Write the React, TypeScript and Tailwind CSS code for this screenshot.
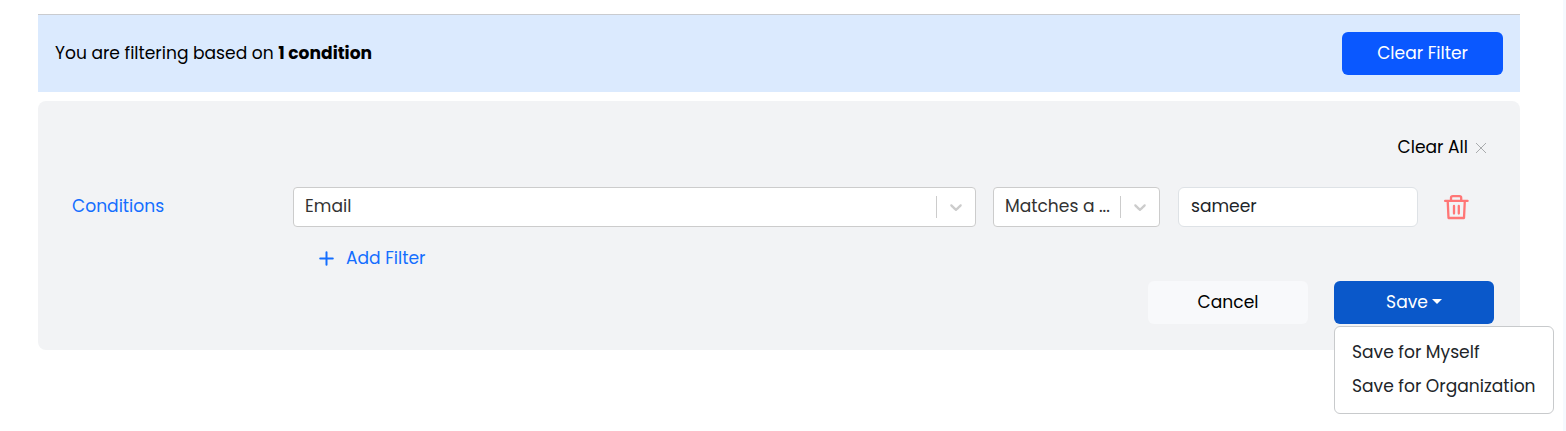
import React from "react";

function Chevron() {
  return (
    <svg width="20" height="20" viewBox="0 0 20 20" className="fill-[#cccccc]">
      <path d="M4.516 7.548c0.436-0.446 1.043-0.481 1.576 0l3.908 3.747 3.908-3.747c0.533-0.481 1.141-0.446 1.574 0 0.436 0.445 0.408 1.197 0 1.615-0.406 0.418-4.695 4.502-4.695 4.502-0.217 0.223-0.502 0.335-0.787 0.335s-0.57-0.112-0.789-0.335c0 0-4.287-4.084-4.695-4.502s-0.436-1.17 0-1.615z" />
    </svg>
  );
}

function Select({ className, children }: { className: string; children: React.ReactNode }) {
  return (
    <div className={`flex h-10 items-center rounded border border-[#cccccc] bg-white pl-[11px] ${className}`}>
      <div className="-mt-0.5 grow whitespace-nowrap text-[#333333]">{children}</div>
      <div className="h-[22px] w-px bg-[#cccccc]" />
      <div className="flex w-[38px] items-center justify-center">
        <Chevron />
      </div>
    </div>
  );
}

function TrashIcon() {
  return (
    <svg width="26" height="26" viewBox="0 0 26 26" fill="none" stroke="#ff7676" strokeWidth="2.3">
      <path d="M2.1 6.9H24.6" strokeLinecap="round" />
      <path d="M8 7V3.8Q8 2.1 9.8 2.1H16.5Q18.2 2.1 18.2 3.8V7" />
      <path d="M4.7 7L5.5 24H21L21.8 7" strokeLinejoin="round" />
      <path d="M11 12V19.5M15.8 12V19.5" strokeLinecap="round" />
    </svg>
  );
}

export default function App() {
  return (
    <div className="relative flex h-[431px] w-full overflow-hidden bg-white font-[Poppins,Inter,sans-serif] text-[17.1px] leading-6 text-black">
      <div className="ml-[38px] w-[1482px] pt-3.5">
        <div className="flex h-[78px] items-center justify-between border-t border-[#c9cbcf] bg-[#dbeafe] px-[17px]">
          <p className="-mt-0.5 whitespace-nowrap">
            You are filtering based on <b className="font-bold">1 condition</b>
          </p>
          <button className="h-[43px] w-[161px] rounded-md bg-[#0a58ff] pb-0.5 text-white">Clear Filter</button>
        </div>

        <div className="mt-[9px] h-[249px] rounded-lg bg-[#f2f3f5] pt-[34px]">
          <div className="flex h-6 items-center justify-end gap-[7px] pr-[33px]">
            <span>Clear All</span>
            <svg width="12" height="12" viewBox="0 0 12 12" stroke="#a9abad" strokeWidth="1" className="mt-px">
              <path d="M1 1L11 11M11 1L1 11" />
            </svg>
          </div>

          <div className="mt-7 flex h-10 items-center pl-[34px]">
            <div className="-mt-0.5 w-[221px] text-[#146eff]">Conditions</div>
            <Select className="w-[683px]">Email</Select>
            <Select className="ml-[17px] w-[167px]">Matches a ...</Select>
            <div className="ml-[18px] flex h-10 w-60 items-center rounded-md border border-[#dee2e6] bg-white pl-3 text-[#212529]">
              <span className="-mt-0.5">sameer</span>
            </div>
            <button className="ml-[25px]"><TrashIcon /></button>
          </div>

          <button className="mt-[19px] ml-[281px] flex h-6 items-center gap-3 text-[#146eff]">
            <svg width="15" height="15" viewBox="0 0 15 15" stroke="currentColor" strokeWidth="2" strokeLinecap="round" className="mt-px">
              <path d="M7.5 1.2V13.8M1.2 7.5H13.8" />
            </svg>
            <span>Add Filter</span>
          </button>

          <div className="mt-[11px] flex justify-end gap-[26px] pr-[26px]">
            <button className="h-[43px] w-40 rounded-md bg-[#f8f9fb] pb-0.5">Cancel</button>
            <div className="relative">
              <button className="flex h-[43px] w-40 items-center justify-center gap-1 rounded-md bg-[#0a58ca] pb-0.5 text-white">
                <span>Save</span>
                <svg width="10" height="5" viewBox="0 0 10 5" fill="white"><path d="M0 0H10L5 5Z" /></svg>
              </button>
              <div className="absolute top-[45px] left-0 flex h-[88px] w-[220px] flex-col rounded-md border border-[#c8cacc] bg-white pt-2 pl-[17px] text-[#212529]">
                <span className="h-[34px] whitespace-nowrap py-[5px]">Save for Myself</span>
                <span className="h-[34px] whitespace-nowrap py-[5px]">Save for Organization</span>
              </div>
            </div>
          </div>
        </div>
      </div>
      <div className="ml-auto h-full w-[3px] bg-[#f5f9fe]" />
    </div>
  );
}
